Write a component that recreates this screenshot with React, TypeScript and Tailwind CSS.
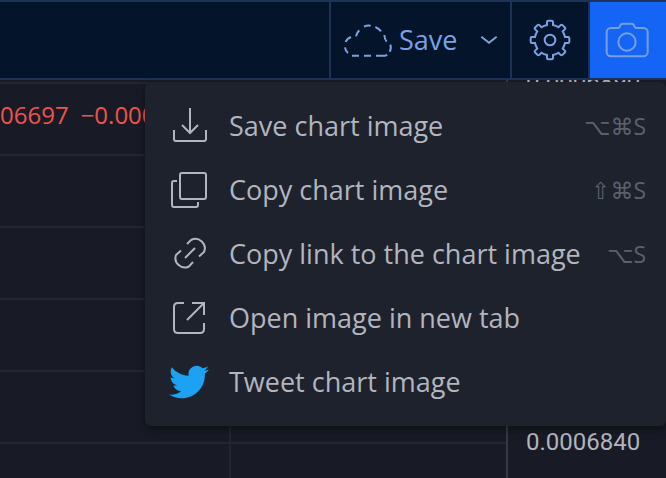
import type { ReactNode } from "react";
import { FaTwitter } from "react-icons/fa";

function Icon({ children }: { children: ReactNode }) {
  return (
    <svg
      viewBox="0 0 40 40"
      className="size-10 shrink-0"
      fill="none"
      stroke="currentColor"
      strokeWidth="2"
      aria-hidden="true"
    >
      {children}
    </svg>
  );
}

function CloudIcon() {
  return (
    <svg viewBox="72 66 150 105" className="h-[35px] w-[50px] shrink-0" fill="none" stroke="currentColor" strokeWidth="6" aria-hidden="true">
      <path d="M99 164h21M135 164h21M171 164h27q4 0 6-3M212 152q6-10 2-21M203 122q-6-6-7-20M186 91q-6-8-17-13M155 74q-10-2-20 3M121 88q-8 6-10 18M96 108q-12 5-16 15M78 139q1 10 9 17" />
    </svg>
  );
}

function ChevronIcon() {
  return (
    <svg viewBox="483 105 54 30" className="h-[10px] w-[18px] shrink-0" fill="none" stroke="currentColor" strokeWidth="6" aria-hidden="true">
      <path d="M487 110l23 18 23-18" />
    </svg>
  );
}

const gearTeeth = [0, 45, 90, 135, 180, 225, 270, 315];

function gearPath() {
  const turn = (x: number, y: number, deg: number) => {
    const a = (deg * Math.PI) / 180;
    return `${(x * Math.cos(a) - y * Math.sin(a)).toFixed(1)} ${(x * Math.sin(a) + y * Math.cos(a)).toFixed(1)}`;
  };
  const parts = gearTeeth.map((deg, i) => {
    const start = i === 0 ? `M${turn(-9, -45, deg)}` : `A46 46 0 0 1 ${turn(-9, -45, deg)}`;
    return `${start}L${turn(-9, -54, deg)}Q${turn(-9, -58, deg)} ${turn(-5, -58, deg)}L${turn(5, -58, deg)}Q${turn(9, -58, deg)} ${turn(9, -54, deg)}L${turn(9, -45, deg)}`;
  });
  return `${parts.join("")}A46 46 0 0 1 ${turn(-9, -45, 0)}Z`;
}

function GearIcon() {
  return (
    <svg viewBox="-63 -63 126 126" className="size-[42px]" fill="none" stroke="currentColor" strokeWidth="6" aria-hidden="true">
      <path d={gearPath()} />
      <circle r="16" />
    </svg>
  );
}

function CameraIcon() {
  return (
    <svg viewBox="315 63 132 108" className="h-[36px] w-[44px]" fill="none" stroke="currentColor" strokeWidth="6" aria-hidden="true">
      <path d="M320 94a13 13 0 0 1 13-13h20q5 0 7-5l1-3q2-5 8-5h25q6 0 8 5l1 3q2 5 7 5h20a13 13 0 0 1 13 13v59a13 13 0 0 1-13 13H333a13 13 0 0 1-13-13z" />
      <circle cx="381" cy="123" r="26" />
    </svg>
  );
}

const items: { label: string; keys?: string; icon: ReactNode }[] = [
  {
    label: "Save chart image",
    keys: "⌥⌘S",
    icon: (
      <Icon>
        <path d="M21 2v25M13 19l8 8 8-8M5 24v9q0 2 2 2h28q2 0 2-2v-9" />
      </Icon>
    ),
  },
  {
    label: "Copy chart image",
    keys: "⇧⌘S",
    icon: (
      <Icon>
        <rect x="11" y="3" width="26" height="26" rx="2" />
        <path d="M8 11H5q-2 0-2 2v22q0 2 2 2h22q2 0 2-2v-3" />
      </Icon>
    ),
  },
  {
    label: "Copy link to the chart image",
    keys: "⌥S",
    icon: (
      <Icon>
        <path d="M16 24l10-10M18 10l4-4A9.400 9.400 0 0 1 35 18L30 22.500M12 16.500L7 21A9.400 9.400 0 0 0 20 32.500L24 28" />
      </Icon>
    ),
  },
  {
    label: "Open image in new tab",
    icon: (
      <Icon>
        <path d="M15 5H9q-4 0-4 4v22q0 4 4 4h22q4 0 4-4v-6M23 5h12v12M18 22L35 5" />
      </Icon>
    ),
  },
  {
    label: "Tweet chart image",
    icon: <FaTwitter className="size-10 shrink-0 text-[#1da1f2]" aria-hidden="true" />,
  },
];

const prices = ["0.0006890", "0.0006880", "0.0006870", "0.0006860", "0.0006850", "0.0006840"];

function SnapshotMenu() {
  return (
    <div
      role="menu"
      className="absolute top-full right-0 z-10 mt-1 w-[521px] rounded-md bg-[#1e222d] py-3 shadow-[0_4px_8px_rgba(0,0,0,0.4)]"
    >
      {items.map((item) => (
        <button
          key={item.label}
          type="button"
          role="menuitem"
          className="flex h-16 w-full items-center gap-5 pr-5 pl-6 text-left text-[#b2b5be]"
        >
          {item.icon}
          <span className="flex-1 text-[27px] leading-8 whitespace-nowrap">{item.label}</span>
          {item.keys && <span className="text-[23px] leading-8 text-[#5d606b]">{item.keys}</span>}
        </button>
      ))}
    </div>
  );
}

export default function App() {
  return (
    <div className="flex h-screen flex-col overflow-hidden bg-[#181b25] font-['Open_Sans','DejaVu_Sans',sans-serif]">
      <header className="relative z-10 flex h-20 shrink-0 justify-end border-y-2 border-[#1c3257] bg-[#04142b] text-[#7aa2e3]">
        <button type="button" className="flex w-[181px] items-center justify-between border-l-2 border-[#1c3257] px-3">
          <span className="flex items-center gap-1.5">
            <CloudIcon />
            <span className="text-[27px] leading-8">Save</span>
          </span>
          <ChevronIcon />
        </button>
        <button type="button" aria-label="Settings" className="flex w-20 items-center justify-center border-x-2 border-[#1c3257]">
          <GearIcon />
        </button>
        <div className="relative flex">
          <button type="button" aria-label="Take a snapshot" className="flex w-[76px] items-center justify-center bg-[#1464f5] pr-0.5 text-[#7a9fe0]">
            <CameraIcon />
          </button>
          <SnapshotMenu />
        </div>
      </header>

      <main className="flex flex-1 overflow-hidden">
        <div className="min-w-0 flex-1 pt-[2px]">
          {prices.map((price, i) => (
            <div key={price} className="flex h-[72px] border-t-2 border-[#232632]">
              <div className="min-w-0 flex-1 pt-[15px] text-2xl whitespace-nowrap text-[#ef5350]">
                {i === 0 && (
                  <div className="flex gap-3">
                    <span>06697</span>
                    <span>−0.000</span>
                  </div>
                )}
              </div>
              <div className="w-[277px] shrink-0 border-l-2 border-[#232632]" />
            </div>
          ))}
        </div>
        <div className="-mt-[34px] w-40 shrink-0 border-l-2 border-[#363a45] pl-[18px] font-[Roboto,sans-serif] text-2xl text-[#b2b5be]">
          {prices.map((price) => (
            <div key={price} className="flex h-[72px] items-center">
              {price}
            </div>
          ))}
        </div>
      </main>
    </div>
  );
}
